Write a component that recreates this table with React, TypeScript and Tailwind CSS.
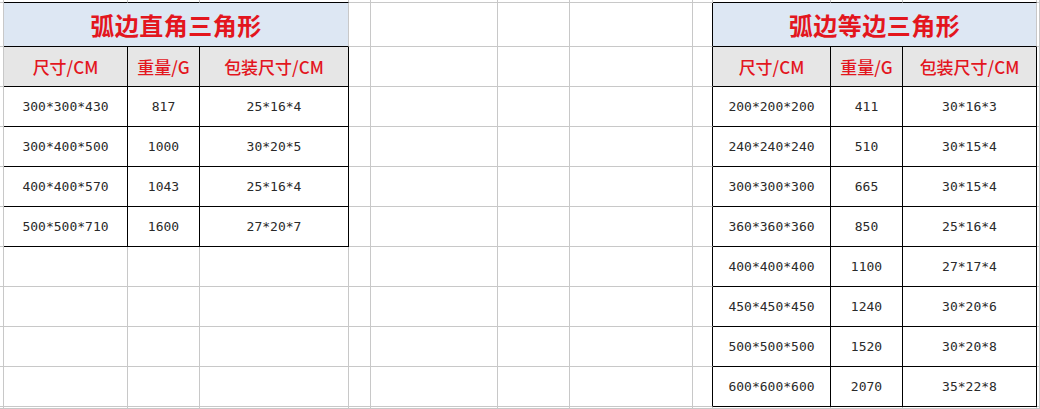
import React from "react";

const leftData = [
  ["300*300*430", "817", "25*16*4"],
  ["300*400*500", "1000", "30*20*5"],
  ["400*400*570", "1043", "25*16*4"],
  ["500*500*710", "1600", "27*20*7"],
];
const rightData = [
  ["200*200*200", "411", "30*16*3"],
  ["240*240*240", "510", "30*15*4"],
  ["300*300*300", "665", "30*15*4"],
  ["360*360*360", "850", "25*16*4"],
  ["400*400*400", "1100", "27*17*4"],
  ["450*450*450", "1240", "30*20*6"],
  ["500*500*500", "1520", "30*20*8"],
  ["600*600*600", "2070", "35*22*8"],
];
const headers = ["尺寸/CM", "重量/G", "包装尺寸/CM"];

function rightBlack(r: number, c: number) {
  if (c === 3 && r >= 1 && r <= 6) return true;
  if ((c === 1 || c === 2) && r >= 2 && r <= 6) return true;
  if ((c === 8 || c === 11) && r >= 1 && r <= 10) return true;
  if ((c === 9 || c === 10) && r >= 2 && r <= 10) return true;
  return false;
}
function bottomBlack(r: number, c: number) {
  if (c >= 1 && c <= 3 && r >= 0 && r <= 6) return true;
  if (c >= 9 && c <= 11 && r >= 0 && r <= 10) return true;
  return false;
}

export default function App() {
  const cells: React.ReactNode[] = [];
  for (let r = 0; r < 12; r++) {
    for (let c = 0; c < 13; c++) {
      const rb = rightBlack(r, c) ? "border-r-black" : "border-r-[#c8c8c8]";
      const bb = bottomBlack(r, c) ? "border-b-black" : "border-b-[#c8c8c8]";
      const base = `border-r border-b ${rb} ${bb} flex items-center justify-center overflow-hidden`;
      if (r === 1 && (c === 1 || c === 9)) {
        cells.push(
          <div
            key={`${r}-${c}`}
            className={`${base} col-span-3 bg-[#dde7f3] text-[#e3161e] text-[24px] font-semibold tracking-[0.5px] [font-family:'Noto_Sans_CJK_SC',sans-serif]`}
          >
            {c === 1 ? "弧边直角三角形" : "弧边等边三角形"}
          </div>
        );
        c += 2;
        continue;
      }
      let content: React.ReactNode = null;
      let extra = "";
      if (r === 2 && ((c >= 1 && c <= 3) || (c >= 9 && c <= 11))) {
        const i = c >= 9 ? c - 9 : c - 1;
        content = headers[i];
        extra =
          "bg-[#e6e6e6] text-[#e3161e] text-[17px] font-medium [font-family:'Noto_Sans_CJK_SC',sans-serif]";
      } else if (r >= 3) {
        const d = r - 3;
        if (c >= 1 && c <= 3 && d < leftData.length) {
          content = leftData[d][c - 1];
        } else if (c >= 9 && c <= 11 && d < rightData.length) {
          content = rightData[d][c - 9];
        }
        if (content) {
          extra =
            "text-[13px] text-[#2a2a2a] [font-family:'DejaVu_Sans_Mono',monospace]";
        }
      }
      cells.push(
        <div key={`${r}-${c}`} className={`${base} ${extra}`}>
          {content}
        </div>
      );
    }
  }
  return (
    <div className="w-[1040px] h-[409px] bg-white overflow-hidden">
      <div className="grid grid-cols-[4px_124px_72px_149px_22px_127px_72px_123px_20px_118px_72px_134px_3px] grid-rows-[3px_44px_repeat(9,40px)_2px] w-[1040px] h-[409px]">
        {cells}
      </div>
    </div>
  );
}
